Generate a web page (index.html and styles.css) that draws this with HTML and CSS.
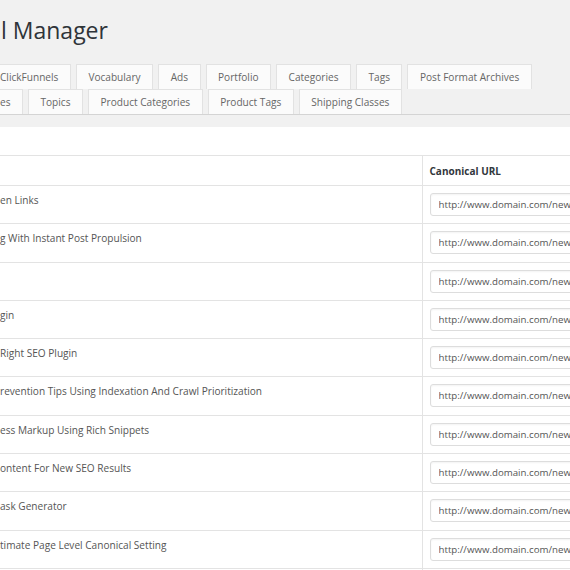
FILE: index.html
```html
<!DOCTYPE html>
<html>
<head>
<meta charset="utf-8">
<link rel="stylesheet" href="styles.css">
</head>
<body>
<div class="wrap">
  <h1 class="page-title">l Manager</h1>
  <nav class="tabs">
    <div class="tab-row">
      <a class="tab first">ClickFunnels</a>
      <a class="tab">Vocabulary</a>
      <a class="tab">Ads</a>
      <a class="tab">Portfolio</a>
      <a class="tab">Categories</a>
      <a class="tab">Tags</a>
      <a class="tab">Post Format Archives</a>
    </div>
    <div class="tab-row">
      <a class="tab first">es</a>
      <a class="tab">Topics</a>
      <a class="tab">Product Categories</a>
      <a class="tab">Product Tags</a>
      <a class="tab">Shipping Classes</a>
    </div>
  </nav>
  <div class="panel">
    <table class="list">
      <thead>
        <tr><th class="col-title"></th><th class="col-url">Canonical URL</th></tr>
      </thead>
      <tbody>
        <tr><td class="col-title">en Links</td><td class="col-url"><input class="url" type="text" value="http://www.domain.com/new-post-url/"></td></tr>
        <tr><td class="col-title">g With Instant Post Propulsion</td><td class="col-url"><input class="url" type="text" value="http://www.domain.com/new-post-url/"></td></tr>
        <tr><td class="col-title"></td><td class="col-url"><input class="url" type="text" value="http://www.domain.com/new-post-url/"></td></tr>
        <tr><td class="col-title">gin</td><td class="col-url"><input class="url" type="text" value="http://www.domain.com/new-post-url/"></td></tr>
        <tr><td class="col-title">Right SEO Plugin</td><td class="col-url"><input class="url" type="text" value="http://www.domain.com/new-post-url/"></td></tr>
        <tr><td class="col-title">revention Tips Using Indexation And Crawl Prioritization</td><td class="col-url"><input class="url" type="text" value="http://www.domain.com/new-post-url/"></td></tr>
        <tr><td class="col-title">ess Markup Using Rich Snippets</td><td class="col-url"><input class="url" type="text" value="http://www.domain.com/new-post-url/"></td></tr>
        <tr><td class="col-title">ontent For New SEO Results</td><td class="col-url"><input class="url" type="text" value="http://www.domain.com/new-post-url/"></td></tr>
        <tr><td class="col-title">ask Generator</td><td class="col-url"><input class="url" type="text" value="http://www.domain.com/new-post-url/"></td></tr>
        <tr><td class="col-title">timate Page Level Canonical Setting</td><td class="col-url"><input class="url" type="text" value="http://www.domain.com/new-post-url/"></td></tr>
        <tr><td class="col-title"></td><td class="col-url"><input class="url" type="text" value="http://www.domain.com/new-post-url/"></td></tr>
      </tbody>
    </table>
  </div>
</div>
</body>
</html>
```
FILE: styles.css
```css
html, body {
  margin: 0;
  padding: 0;
  background: #f1f1f1;
  overflow: hidden;
  width: 570px;
  height: 570px;
}
.wrap {
  font-family: "Open Sans", "Noto Sans", sans-serif;
  color: #444;
  width: 700px;
}
.page-title {
  margin: 0;
  padding: 14px 0 0 1px;
  height: 64px;
  box-sizing: border-box;
  font-size: 23px;
  font-weight: 400;
  line-height: 32px;
  color: #2f3439;
}
.tabs {
  border-bottom: 1px solid #d4d4d4;
}
.tab-row {
  display: flex;
  gap: 5px;
}
.tab {
  display: block;
  box-sizing: border-box;
  height: 25px;
  padding: 0 11.5px;
  border: 1px solid #e2e2e2;
  border-bottom: none;
  background: #fbfbfb;
  color: #666;
  font-size: 10.1px;
  line-height: 24px;
  white-space: nowrap;
}
.tab.first {
  margin-left: -12.5px;
}
.panel {
  margin-top: 12px;
  background: #fff;
  padding-top: 28px;
}
.list {
  border-collapse: collapse;
  width: 100%;
  table-layout: fixed;
}
.list th, .list td {
  border-top: 1px solid #e3e3e3;
  text-align: left;
  vertical-align: top;
}
.list th {
  height: 30px;
  box-sizing: border-box;
  padding: 7px 7px 0;
  font-size: 10px;
  font-weight: 700;
  color: #32373c;
  line-height: 16px;
}
.list td {
  height: 38.3px;
  box-sizing: border-box;
  font-size: 10.1px;
  line-height: 14px;
  color: #555;
}
.list td.col-title {
  padding: 7px 0 0 0;
}
.list td.col-url {
  padding: 7px 0 0 7px;
}
.col-title {
  width: 422px;
}
.col-url {
  border-left: 1px solid #e3e3e3;
}
.url {
  display: block;
  box-sizing: border-box;
  width: 220px;
  height: 23px;
  margin: 0;
  padding: 0 8px;
  border: 1px solid #ddd;
  border-radius: 3px;
  box-shadow: inset 0 1px 2px rgba(0,0,0,0.05);
  background: #fff;
  font-family: "Open Sans", "Noto Sans", sans-serif;
  font-size: 9.7px;
  color: #555;
}
```
